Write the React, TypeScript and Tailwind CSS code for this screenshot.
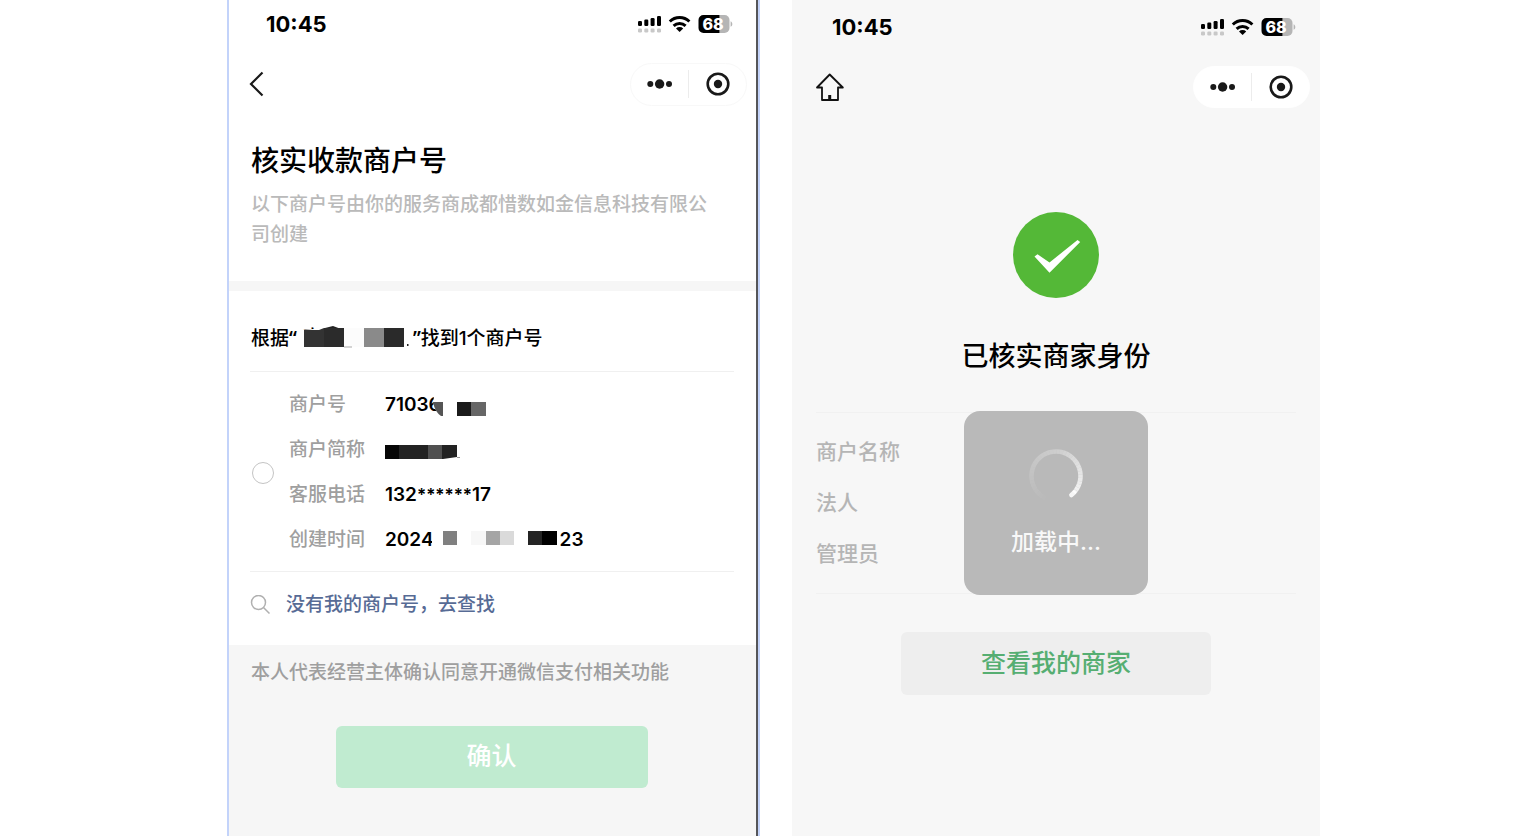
import type { ReactNode } from "react";

type Block = { x: number; w: number; fill: string };

const nameBlocks: Block[] = [
  { x: 21, w: 20, fill: "#2b2b2b" },
  { x: 41, w: 20, fill: "#fcfcfc" },
  { x: 61, w: 20, fill: "#8a8a8a" },
  { x: 81, w: 20, fill: "#2a2a2a" },
];

const shortNameBlocks: Block[] = [
  { x: 0, w: 14, fill: "#060606" },
  { x: 14, w: 29, fill: "#222222" },
  { x: 43, w: 14, fill: "#505050" },
  { x: 57, w: 15, fill: "#222222" },
];

const dateBlocks: Block[] = [
  { x: 11, w: 14, fill: "#808080" },
  { x: 39, w: 15, fill: "#f7f7f7" },
  { x: 54, w: 14, fill: "#a5a5a5" },
  { x: 68, w: 14, fill: "#dadada" },
  { x: 96, w: 14, fill: "#242424" },
  { x: 110, w: 15, fill: "#000000" },
];

const merchantFields = ["商户名称", "法人", "管理员"];

function Blocks({ items, height, y = 0 }: { items: Block[]; height: number; y?: number }) {
  return (
    <>
      {items.map((b) => (
        <rect key={b.x} x={b.x} y={y} width={b.w} height={height} fill={b.fill} />
      ))}
    </>
  );
}

function StatusBar() {
  return (
    <div className="flex items-center justify-between">
      <span className="text-[22px] leading-8 font-bold">10:45</span>
      <svg width="96" height="20" viewBox="0 0 96 20" aria-hidden="true">
        <g fill="#000">
          <rect x="1" y="7" width="4" height="5" rx="1.2" />
          <rect x="7.3" y="5.5" width="4" height="6.5" rx="1.2" />
          <rect x="13.6" y="4" width="4" height="8" rx="1.2" />
          <rect x="20" y="2" width="4" height="10" rx="1.2" />
        </g>
        <g fill="#c8c8c8">
          <rect x="1" y="14.5" width="4" height="4" rx="1.2" />
          <rect x="7.3" y="14.5" width="4" height="4" rx="1.2" />
          <rect x="13.6" y="14.5" width="4" height="4" rx="1.2" />
          <rect x="20" y="14.5" width="4" height="4" rx="1.2" />
        </g>
        <g fill="none" stroke="#000" strokeWidth="3">
          <path d="M32.8 7.5a14.2 14.2 0 0 1 19.6 0" />
          <path d="M36.6 11.8a8.8 8.8 0 0 1 12 0" />
        </g>
        <path d="M42.6 18l-3.6-3.6a5.2 5.2 0 0 1 7.2 0z" fill="#000" />
        <path d="M82.5 1h5a5 5 0 0 1 5 5v8a5 5 0 0 1-5 5h-5z" fill="#b5b5b5" />
        <path d="M82.5 1h-16a5 5 0 0 0-5 5v8a5 5 0 0 0 5 5h16z" fill="#000" />
        <path d="M93.6 7.2c2.3 1 2.3 4.6 0 5.6z" fill="#b5b5b5" />
        <text x="76" y="15.6" textAnchor="middle" fontSize="16" fontWeight="800" fill="#fff">
          68
        </text>
      </svg>
    </div>
  );
}

function Capsule({ className }: { className: string }) {
  return (
    <div className={`flex w-[117px] items-center rounded-full border bg-white ${className}`}>
      <button type="button" aria-label="更多" className="flex flex-1 justify-center">
        <svg width="28" height="12" viewBox="0 0 28 12" fill="#191919">
          <circle cx="4.3" cy="6" r="3" />
          <circle cx="13.6" cy="6" r="4.7" />
          <circle cx="23" cy="6" r="3" />
        </svg>
      </button>
      <span className="h-7 w-px bg-[#ececec]" />
      <button type="button" aria-label="关闭" className="flex flex-1 justify-center">
        <svg width="24" height="24" viewBox="0 0 24 24">
          <circle cx="12" cy="12" r="10.3" fill="none" stroke="#191919" strokeWidth="2.6" />
          <circle cx="12" cy="12" r="4.2" fill="#191919" />
        </svg>
      </button>
    </div>
  );
}

function Field({ label, children }: { label: string; children?: ReactNode }) {
  return (
    <div className="flex h-[45px] items-center">
      <dt className="w-24 font-medium text-[#9f9f9f]">{label}</dt>
      <dd className="flex items-center font-semibold">{children}</dd>
    </div>
  );
}

function VerifyScreen() {
  return (
    <main className="flex w-full max-w-[533px] flex-col border-x-2 border-[#c3d3fa]">
      <div className="flex flex-1 flex-col border-r-2 border-[#55565a] bg-white">
        <header>
          <div className="flex h-12 flex-col justify-center pr-[23px] pl-[37px]">
            <StatusBar />
          </div>
          <div className="flex h-[72px] items-center justify-between pr-[9px] pl-[19px]">
            <button type="button" aria-label="返回">
              <svg width="16" height="26" viewBox="0 0 16 26" fill="none" stroke="#191919" strokeWidth="2.2">
                <path d="M14.5 1.5L3 13L14.5 24.5" />
              </svg>
            </button>
            <Capsule className="h-[43px] border-[#f8f8f8]" />
          </div>
        </header>

        <section className="px-[22px] pt-[21px] pb-[31px]">
          <h1 className="text-[28px] leading-10 font-medium">核实收款商户号</h1>
          <p className="mt-[9px] pr-4 text-[19px] leading-[30px] font-medium text-[#bababa]">
            以下商户号由你的服务商成都惜数如金信息科技有限公司创建
          </p>
        </section>
        <div className="h-[10px] bg-[#f6f6f6]" />

        <section className="pr-[22px] pl-[21px] pt-8 text-[19px]">
          <h2 className="flex pb-[17px] pl-px leading-[30px] font-medium">
            <span>
              根据<span className="font-['Noto_Sans'] font-semibold">“</span>
            </span>
            <span className="relative ml-[6px] w-[110px]">
              商
              <svg className="absolute top-0 left-0" width="110" height="30" viewBox="0 -4 110 30">
                <path d="M0 3L20 1L34 4L110 2V26H0z" fill="#fff" />
                <path d="M22 1l8-2l8 3l-3 2z" fill="#222" />
                <path d="M104 17h1.5v2H104z" fill="#222" />
                <path d="M1 3L16 3L21 1V20H1z" fill="#333" />
                <Blocks items={nameBlocks} height={19} y={1} />
                <path d="M41 20h8" stroke="#aaa" />
              </svg>
            </span>
            <span>
              <span className="font-['Noto_Sans'] font-semibold">”</span>找到1个商户号
            </span>
          </h2>
          <div className="flex items-center border-y border-[#f0f0f0] pt-[11px] pb-2">
            <input
              type="radio"
              name="merchant"
              aria-label="选择商户号"
              className="ml-[2px] size-[22px] appearance-none rounded-full border border-[#c4c4c4] bg-white"
            />
            <dl className="ml-[15px]">
              <Field label="商户号">
                <span className="relative">
                  71036
                  <svg className="absolute top-0 left-12" width="56" height="30" viewBox="0 0 56 30">
                    <path d="M3 0H56V26H8Q-4 14 3 0z" fill="#fff" />
                    <path d="M0 11H10V25H8Q2 21 0 11z" fill="#555" />
                    <path d="M24 11H38V25H24z" fill="#1b1b1b" />
                    <path d="M38 11H53V25H38z" fill="#666" />
                  </svg>
                </span>
              </Field>
              <Field label="商户简称">
                <svg width="76" height="16" viewBox="0 0 76 16">
                  <Blocks items={shortNameBlocks} height={14} y={2} />
                  <path d="M58 16L72 14V16z" fill="#fff" />
                  <path d="M72 14.5h3" stroke="#999" />
                </svg>
              </Field>
              <Field label="客服电话">
                132<span className="text-[17px]">******</span>17
              </Field>
              <Field label="创建时间">
                <span>2024</span>
                <svg className="-ml-[2px]" width="128" height="20" viewBox="0 0 128 20">
                  <rect width="128" height="20" fill="#fff" />
                  <Blocks items={dateBlocks} height={14} />
                </svg>
                <span>23</span>
              </Field>
            </dl>
          </div>
          <a href="#search" className="mb-[7px] flex h-[66px] items-center font-medium text-[#576b95]">
            <svg className="mr-4" width="20" height="20" viewBox="0 0 20 20" fill="none" stroke="#b0b0b0" strokeWidth="1.5">
              <circle cx="8.5" cy="7.5" r="7" />
              <path d="M13.5 12.5L19.5 18.5" />
            </svg>
            没有我的商户号，去查找
          </a>
        </section>

        <footer className="flex flex-1 flex-col bg-[#f6f6f6] pt-[13px] pr-6 pl-[22px]">
          <p className="text-[19px] leading-[30px] font-medium text-[#9f9f9f]">
            本人代表经营主体确认同意开通微信支付相关功能
          </p>
          <button
            type="button"
            className="mt-[38px] h-[62px] w-[312px] self-center rounded-md bg-[#c0ebd0] text-[25px] font-medium text-white"
          >
            确认
          </button>
        </footer>
      </div>
    </main>
  );
}

function Spinner() {
  const steps = 40;
  const start = 100;
  const sweep = 311;
  const point = (deg: number) => {
    const rad = (deg * Math.PI) / 180;
    return `${28 + 24.5 * Math.cos(rad)} ${28 + 24.5 * Math.sin(rad)}`;
  };

  return (
    <svg width="56" height="56" viewBox="0 0 56 56" fill="none" stroke="#fff" strokeWidth="4.6">
      {Array.from({ length: steps }, (_, i) => {
        const from = start + (sweep / steps) * i;
        const to = start + (sweep / steps) * (i + 1);
        return (
          <path
            key={i}
            d={`M${point(from)}A24.5 24.5 0 0 1 ${point(to)}`}
            strokeOpacity={i < 22 ? (i / 22) * 0.3 : 0.3 + ((i - 22) / 18) * 0.6}
            strokeLinecap={i === steps - 1 ? "round" : "butt"}
          />
        );
      })}
    </svg>
  );
}

function ResultScreen() {
  return (
    <main className="flex w-full max-w-[528px] flex-col bg-[#f7f7f7]">
      <header>
        <div className="flex h-[54px] flex-col justify-center pr-6 pl-10">
          <StatusBar />
        </div>
        <div className="flex h-[66px] items-center justify-between pr-[10px] pl-6">
          <button type="button" aria-label="首页">
            <svg
              width="28"
              height="28"
              viewBox="0 0 28 28"
              fill="none"
              stroke="#111"
              strokeWidth="1.8"
              strokeLinejoin="round"
            >
              <path d="M13.7 1.5L26.8 14.5H22V27H6V14.5H1z" />
              <path d="M13.7 22V27" strokeWidth="3" />
            </svg>
          </button>
          <Capsule className="h-[42px] border-white" />
        </div>
      </header>

      <section className="flex flex-col items-center pt-[92px]">
        <svg width="86" height="86" viewBox="0 0 86 86">
          <circle cx="43" cy="43" r="43" fill="#54b837" />
          <path d="M21.5 44.5L24.5 42.3L36.5 50.5L64.5 28L67.2 30L36.5 60.7z" fill="#fff" />
        </svg>
        <h1 className="mt-[39px] text-[27px] leading-10 font-medium">已核实商家身份</h1>
      </section>

      <section className="relative mx-6 mt-[35px] border-y border-[#f1f1f1] pt-[13px] pb-[14px]">
        <dl className="text-[21px] font-medium text-[#b5b5b5]">
          {merchantFields.map((field) => (
            <div key={field} className="flex h-[51px] items-center">
              <dt>{field}</dt>
            </div>
          ))}
        </dl>
        {/* Loading toast */}
        <div
          role="status"
          className="absolute top-1/2 left-1/2 flex size-[184px] -translate-1/2 flex-col items-center rounded-2xl bg-[#b9b9b9] pt-[37px] text-[23px] text-[#f8f8f8]"
        >
          <Spinner />
          <span className="mt-5 leading-9 font-medium">加载中...</span>
        </div>
      </section>

      <button
        type="button"
        className="mt-[38px] h-[63px] w-[310px] self-center rounded-md bg-[#eeeeee] text-[25px] font-medium text-[#56ae72]"
      >
        查看我的商家
      </button>
    </main>
  );
}

export default function App() {
  return (
    <div className="flex min-h-screen justify-center gap-8 bg-white pl-[11px] font-[Inter,'Noto_Sans_CJK_SC',sans-serif] text-black">
      <VerifyScreen />
      <ResultScreen />
    </div>
  );
}
